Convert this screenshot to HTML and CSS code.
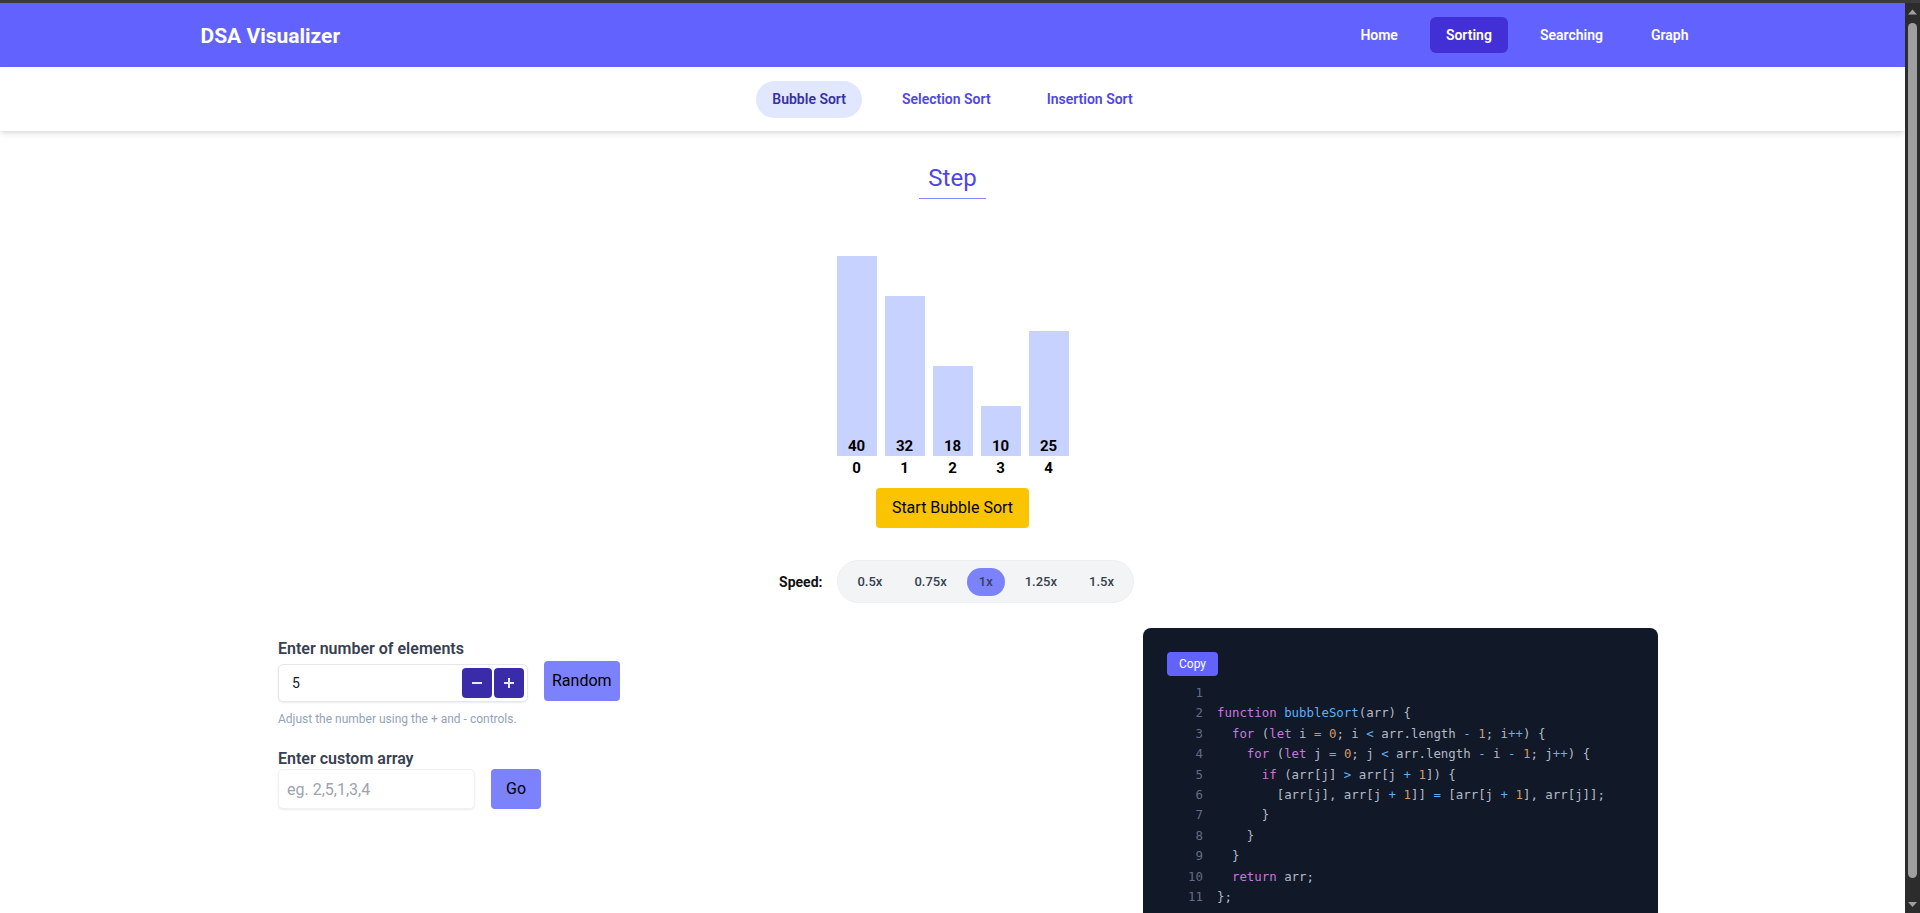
FILE: index.html
```html
<!DOCTYPE html>
<html lang="en">
<head>
<meta charset="utf-8">
<title>DSA Visualizer</title>
<link rel="stylesheet" href="styles.css">
</head>
<body>
<header class="navbar">
  <div class="nav-inner">
    <div class="logo">DSA Visualizer</div>
    <nav class="nav-links">
      <a class="nav-link">Home</a>
      <a class="nav-link active">Sorting</a>
      <a class="nav-link">Searching</a>
      <a class="nav-link">Graph</a>
    </nav>
  </div>
</header>
<div class="subnav">
  <a class="sub-link active">Bubble Sort</a>
  <a class="sub-link">Selection Sort</a>
  <a class="sub-link">Insertion Sort</a>
</div>
<main class="main">
  <div class="title-wrap"><h2 class="title">Step</h2></div>
  <div class="bars">
    <div class="bar-col"><div class="bar" style="height:200px"><span class="bar-val">40</span></div><div class="bar-idx">0</div></div>
    <div class="bar-col"><div class="bar" style="height:160px"><span class="bar-val">32</span></div><div class="bar-idx">1</div></div>
    <div class="bar-col"><div class="bar" style="height:90px"><span class="bar-val">18</span></div><div class="bar-idx">2</div></div>
    <div class="bar-col"><div class="bar" style="height:50px"><span class="bar-val">10</span></div><div class="bar-idx">3</div></div>
    <div class="bar-col"><div class="bar" style="height:125px"><span class="bar-val">25</span></div><div class="bar-idx">4</div></div>
  </div>
  <div class="start-wrap"><button class="start-btn">Start Bubble Sort</button></div>
  <div class="speed-row">
    <span class="speed-label">Speed:</span>
    <div class="speed-pill">
      <span class="speed-opt">0.5x</span>
      <span class="speed-opt">0.75x</span>
      <span class="speed-opt active">1x</span>
      <span class="speed-opt">1.25x</span>
      <span class="speed-opt">1.5x</span>
    </div>
  </div>
  <section class="lower">
    <div class="controls">
      <label class="field-label">Enter number of elements</label>
      <div class="field-row">
        <div class="num-input">
          <span class="num-value">5</span>
          <div class="stepper">
            <button class="step-btn" aria-label="decrease"><svg width="12" height="12" viewBox="0 0 12 12"><path d="M1 6h10" stroke="#e8e8ff" stroke-width="2"/></svg></button>
            <button class="step-btn" aria-label="increase"><svg width="12" height="12" viewBox="0 0 12 12"><path d="M1 6h10M6 1v10" stroke="#e8e8ff" stroke-width="2"/></svg></button>
          </div>
        </div>
        <button class="action-btn random">Random</button>
      </div>
      <p class="hint">Adjust the number using the + and - controls.</p>
      <label class="field-label second">Enter custom array</label>
      <div class="field-row">
        <div class="text-input"><span class="placeholder">eg. 2,5,1,3,4</span></div>
        <button class="action-btn go">Go</button>
      </div>
    </div>
    <div class="code-panel">
      <button class="copy-btn">Copy</button>
<pre class="code"><div class="line"><span class="ln">1</span><span class="src"></span></div><div class="line"><span class="ln">2</span><span class="src"><span class="k">function</span> <span class="f">bubbleSort</span>(arr) {</span></div><div class="line"><span class="ln">3</span><span class="src">  <span class="k">for</span> (<span class="k">let</span> i <span class="o">=</span> <span class="n">0</span>; i <span class="o">&lt;</span> arr.length <span class="o">-</span> <span class="n">1</span>; i<span class="o">++</span>) {</span></div><div class="line"><span class="ln">4</span><span class="src">    <span class="k">for</span> (<span class="k">let</span> j <span class="o">=</span> <span class="n">0</span>; j <span class="o">&lt;</span> arr.length <span class="o">-</span> i <span class="o">-</span> <span class="n">1</span>; j<span class="o">++</span>) {</span></div><div class="line"><span class="ln">5</span><span class="src">      <span class="k">if</span> (arr[j] <span class="o">&gt;</span> arr[j <span class="o">+</span> <span class="n">1</span>]) {</span></div><div class="line"><span class="ln">6</span><span class="src">        [arr[j], arr[j <span class="o">+</span> <span class="n">1</span>]] <span class="o">=</span> [arr[j <span class="o">+</span> <span class="n">1</span>], arr[j]];</span></div><div class="line"><span class="ln">7</span><span class="src">      }</span></div><div class="line"><span class="ln">8</span><span class="src">    }</span></div><div class="line"><span class="ln">9</span><span class="src">  }</span></div><div class="line"><span class="ln">10</span><span class="src">  <span class="k">return</span> arr;</span></div><div class="line"><span class="ln">11</span><span class="src">};</span></div></pre>
    </div>
  </section>
</main>
<div class="scrollbar" aria-hidden="true">
  <div class="sb-arrow"><svg width="15" height="17" viewBox="0 0 15 17"><path d="M3 11.5 L7.5 6.5 L12 11.5 Z" fill="#9f9f9f"/></svg></div>
  <div class="sb-track"><div class="sb-thumb"></div></div>
  <div class="sb-arrow"><svg width="15" height="17" viewBox="0 0 15 17"><path d="M3 6 L7.5 11 L12 6 Z" fill="#9f9f9f"/></svg></div>
</div>
</body>
</html>
```
FILE: styles.css
```css
html {
  background: #3b3b3b;
}
body {
  margin: 3px 15px 0 0;
  background: #ffffff;
  font-family: "Segoe UI", Roboto, "Noto Sans", sans-serif;
  color: #111827;
}

/* Fake window scrollbar (overlay on the right edge) */
.scrollbar {
  position: fixed;
  top: 3px;
  right: 0;
  bottom: 0;
  width: 15px;
  background: #2c2c2c;
  display: flex;
  flex-direction: column;
}
.sb-arrow {
  height: 17px;
  flex: none;
}
.sb-arrow svg {
  display: block;
}
.sb-track {
  flex: 1;
  padding-top: 3px;
}
.sb-thumb {
  width: 9px;
  height: 855px;
  margin: 0 auto;
  border-radius: 5px;
  background: #9f9f9f;
}

/* Navbar */
.navbar {
  height: 64px;
  background: #6262ff;
}
.nav-inner {
  max-width: 1536px;
  height: 100%;
  margin: 0 auto;
  padding: 0 16px;
  box-sizing: border-box;
  display: flex;
  align-items: center;
  justify-content: space-between;
}
.logo {
  color: #ffffff;
  font-size: 21px;
  font-weight: 700;
  line-height: 28px;
  padding-top: 2px;
}
.nav-links {
  display: flex;
  gap: 16px;
}
.nav-link {
  color: #ffffff;
  font-size: 14px;
  font-weight: 600;
  line-height: 20px;
  padding: 8px 16px;
  border-radius: 6px;
}
.nav-link.active {
  background: #432fd6;
}

/* Sub navigation */
.subnav {
  height: 64px;
  display: flex;
  align-items: center;
  justify-content: center;
  gap: 24px;
  background: #ffffff;
  box-shadow: 0 4px 6px -1px rgba(0, 0, 0, 0.1), 0 2px 4px -2px rgba(0, 0, 0, 0.1);
  position: relative;
}
.sub-link {
  color: #4f46e5;
  font-size: 14px;
  font-weight: 600;
  line-height: 21px;
  padding: 8px 16px;
  border-radius: 9999px;
}
.sub-link.active {
  background: #e0e7ff;
  color: #3730a3;
}

/* Main */
.title-wrap {
  text-align: center;
  margin-top: 31px;
}
.title {
  display: inline-block;
  margin: 0;
  padding: 0 9px 4px;
  font-size: 24px;
  font-weight: 400;
  line-height: 32px;
  color: #4f46e5;
  border-bottom: 1px solid #818cf8;
}
.bars {
  display: flex;
  justify-content: center;
  align-items: flex-end;
  gap: 8px;
  margin-top: 57px;
}
.bar-col {
  display: flex;
  flex-direction: column;
  align-items: center;
}
.bar {
  width: 40px;
  background: #c7d2fe;
  display: flex;
  align-items: flex-end;
  justify-content: center;
}
.bar-val,
.bar-idx {
  font-size: 15px;
  font-weight: 700;
  line-height: 20px;
  color: #000000;
}
.bar-idx {
  margin-top: 2px;
}
.start-wrap {
  text-align: center;
  margin-top: 10px;
}
.start-btn {
  border: none;
  background: #fac400;
  color: #000000;
  font-family: inherit;
  font-size: 16px;
  line-height: 24px;
  padding: 8px 16px;
  border-radius: 4px;
}
.speed-row {
  display: flex;
  justify-content: center;
  align-items: center;
  gap: 15px;
  margin-top: 32px;
  padding-left: 8px;
}
.speed-label {
  font-size: 14px;
  font-weight: 700;
  color: #111111;
}
.speed-pill {
  display: flex;
  gap: 8px;
  padding: 6.5px 7px;
  background: #f3f4f6;
  border: 1px solid #eceef1;
  border-radius: 9999px;
}
.speed-opt {
  font-size: 13px;
  font-weight: 500;
  line-height: 20px;
  padding: 4px 12px;
  border-radius: 9999px;
  color: #374151;
}
.speed-opt.active {
  background: #7b82fc;
}

/* Lower section */
.lower {
  display: grid;
  grid-template-columns: 1fr 515px;
  padding: 0 247px 0 278px;
  margin-top: 25px;
}
.controls {
  padding-top: 9px;
  display: flex;
  flex-direction: column;
  align-items: flex-start;
}
.field-label {
  font-size: 16px;
  font-weight: 600;
  line-height: 24px;
  color: #374151;
}
.field-label.second {
  margin-top: 20px;
  margin-bottom: -2px;
}
.field-row {
  display: flex;
  align-items: flex-start;
  gap: 16px;
}
.num-input {
  width: 250px;
  height: 38px;
  margin-top: 3px;
  box-sizing: border-box;
  border: 1px solid #e5e7eb;
  border-radius: 5px;
  background: #ffffff;
  box-shadow: 0 1px 2px rgba(0, 0, 0, 0.08);
  display: flex;
  align-items: center;
  justify-content: space-between;
  padding: 0 3px 0 13px;
}
.num-value {
  font-size: 14px;
  color: #111827;
}
.stepper {
  display: flex;
  gap: 2px;
}
.step-btn {
  width: 30px;
  height: 30px;
  border: none;
  border-radius: 4px;
  background: #3a2ba8;
  padding: 0;
  display: flex;
  align-items: center;
  justify-content: center;
}
.action-btn {
  border: none;
  background: #7b82fc;
  color: #000000;
  font-family: inherit;
  font-size: 16px;
  line-height: 24px;
  padding: 8px;
  border-radius: 4px;
}
.action-btn.go {
  padding: 8px 15px;
  align-self: stretch;
}
.hint {
  margin: 9px 0 0;
  font-size: 12px;
  line-height: 16px;
  color: #94a3b8;
}
.text-input {
  width: 197px;
  height: 40px;
  box-sizing: border-box;
  border: 1px solid #f0f1f3;
  border-radius: 5px;
  background: #ffffff;
  box-shadow: 0 1px 2px rgba(0, 0, 0, 0.08);
  display: flex;
  align-items: center;
  padding-left: 8px;
}
.placeholder {
  font-size: 16px;
  color: #9ca3af;
}

/* Code panel */
.code-panel {
  align-self: start;
  background: #111827;
  border-radius: 8px;
  padding: 24px;
}
.copy-btn {
  display: block;
  border: none;
  background: #6262ff;
  color: #ffffff;
  font-family: inherit;
  font-size: 12px;
  line-height: 16px;
  padding: 4px 12px;
  border-radius: 4px;
}
.code {
  margin: 7px 0 0;
  padding: 0 0 8px 8px;
  font-family: "DejaVu Sans Mono", "Liberation Mono", monospace;
  font-size: 12.4px;
  line-height: 20.4px;
  color: #b3bac6;
}
.line {
  display: flex;
  min-height: 20.4px;
}
.ln {
  display: inline-block;
  min-width: 28px;
  padding-right: 14px;
  text-align: right;
  color: #636d83;
}
.src {
  white-space: pre;
}
.k { color: #c678dd; }
.f { color: #61afef; }
.n { color: #d19a66; }
.o { color: #61afef; }
```
